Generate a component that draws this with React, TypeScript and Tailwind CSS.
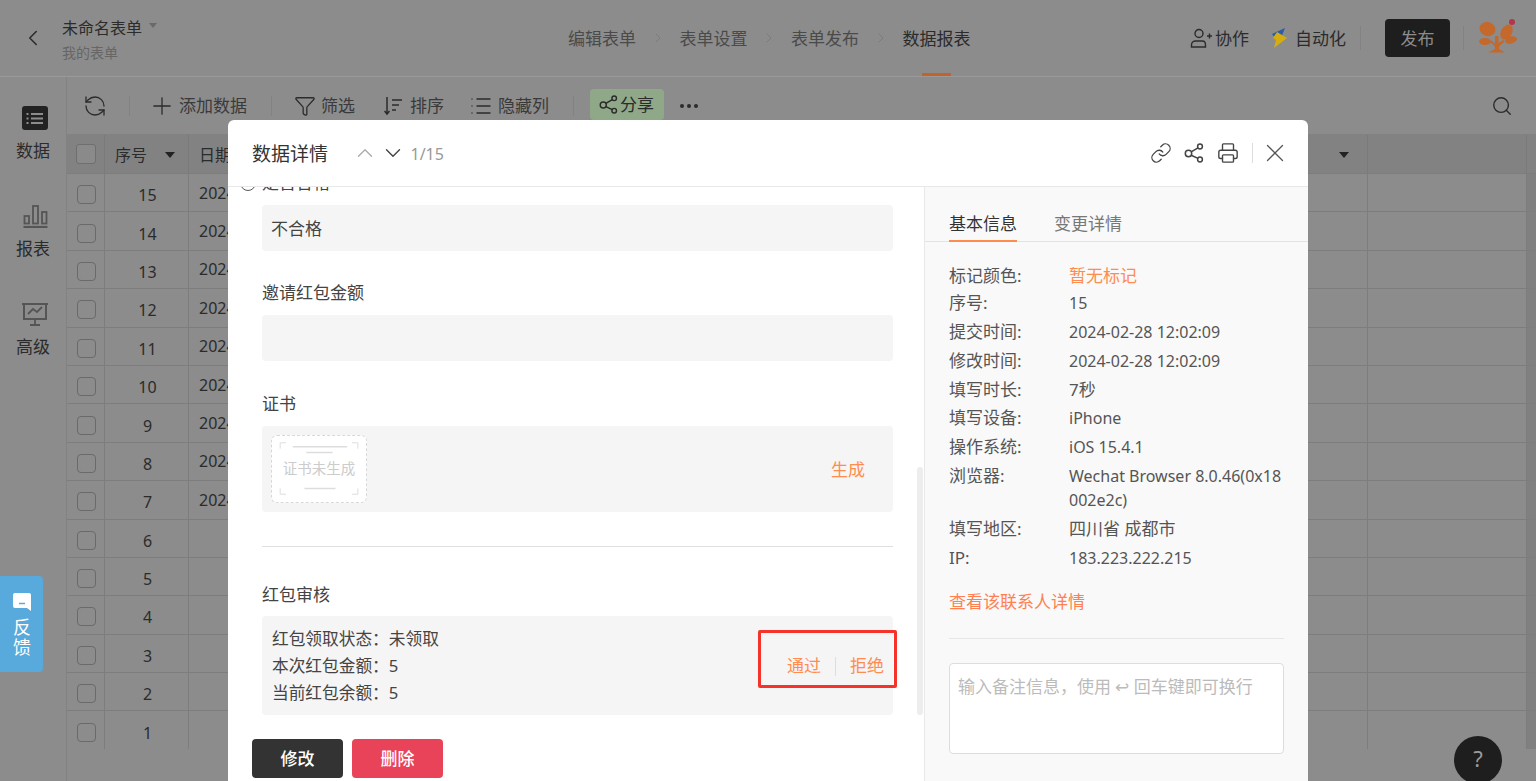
import {
  ChevronDown,
  ChevronLeft,
  ChevronRight,
  ChevronUp,
  Funnel,
  Link,
  List,
  Plus,
  Printer,
  RefreshCcw,
  Search,
  X,
} from 'lucide-react'

const rows = [15, 14, 13, 12, 11, 10, 9, 8, 7, 6, 5, 4, 3, 2, 1]

const info: [string, string, boolean][] = [
  ['序号:', '15', true],
  ['提交时间:', '2024-02-28 12:02:09', true],
  ['修改时间:', '2024-02-28 12:02:09', true],
  ['填写时长:', '7秒', false],
  ['填写设备:', 'iPhone', true],
  ['操作系统:', 'iOS 15.4.1', true],
  ['浏览器:', 'Wechat Browser 8.0.46(0x18002e2c)', true],
  ['填写地区:', '四川省 成都市', false],
  ['IP:', '183.223.222.215', true],
]

const ShareIcon = ({ className }: { className?: string }) => (
  <svg viewBox="0 0 20 20" fill="none" stroke="currentColor" strokeWidth="1.5" className={className}>
    <circle cx="4.5" cy="10.5" r="3.2" />
    <circle cx="16" cy="3.5" r="2.4" />
    <circle cx="16" cy="16.5" r="2.4" />
    <path d="M7.200 8.800 14 4.800M7.200 12.200l6.800 3.200" />
  </svg>
)

const Logo = () => (
  <svg viewBox="0 0 38 36" className="h-9 w-[38px]">
    <ellipse cx="8.500" cy="10" rx="8" ry="7" transform="rotate(20 8.500 10)" fill="#c4682c" />
    <ellipse cx="27.500" cy="13" rx="5.500" ry="8" transform="rotate(30 27.500 13)" fill="#c4682c" />
    <ellipse cx="6" cy="22.500" rx="6" ry="3.500" fill="#c4682c" />
    <ellipse cx="32" cy="21" rx="6" ry="3.500" transform="rotate(-15 32 21)" fill="#c4682c" />
    <path d="M16 17h3.500v7c2-1 3-2 5-3l1 1.500c-2 2-4.500 3.500-5.500 5.500v2l6 3.500H9l7-3.500v-2c-1-2-3-3.500-5-5l1-1.500c1.500 1 3 2 4 3Z" fill="#c4682c" />
    <circle cx="33" cy="3" r="3" fill="#b5344c" />
  </svg>
)

const Step = ({ label, active }: { label: string; active?: boolean }) => (
  <div className="relative flex h-[76px] items-center pt-[2px]">
    <span className={active ? 'text-[#2b2b2b]' : 'text-[#4a4a4a]'}>{label}</span>
    {active && <div className="absolute bottom-0 left-[19px] h-[3px] w-[29px] bg-[#c4622c]" />}
  </div>
)

const SideItem = ({ label, icon }: { label: string; icon: React.ReactNode }) => (
  <div className="flex h-[98px] flex-col items-center pt-[27px]">
    <div className="ml-[4px] flex h-[27px] items-center">{icon}</div>
    <span className="mt-[7px] text-[#2b2b2b]">{label}</span>
  </div>
)

export default function App() {
  return (
    <div className="relative h-[781px] w-[1536px] overflow-hidden bg-[#8c8c8c] font-['Noto_Sans','Noto_Sans_CJK_SC',sans-serif] text-[17px] text-[#2b2b2b]">
      {/* Top bar */}
      <header className="flex h-[77px] items-center border-b border-[#9a9a9a]">
        <div className="flex w-[568px] items-center pl-[20px]">
          <ChevronLeft className="size-[26px] text-[#2b2b2b]" strokeWidth={1.4} />
          <div className="mt-[3px] ml-[16px]">
            <div className="flex items-center text-[16px] leading-[22px]">
              未命名表单
              <span className="mb-1 ml-[7px] border-x-[4px] border-t-[5px] border-x-transparent border-t-[#6a6a6a]" />
            </div>
            <div className="mt-[4px] text-[14px] leading-[20px] text-[#666]">我的表单</div>
          </div>
        </div>
        <nav className="flex items-center">
          <Step label="编辑表单" />
          <ChevronRight className="mx-[13.750px] size-[16px] text-[#777]" strokeWidth={1.2} />
          <Step label="表单设置" />
          <ChevronRight className="mx-[13.750px] size-[16px] text-[#777]" strokeWidth={1.2} />
          <Step label="表单发布" />
          <ChevronRight className="mx-[13.750px] size-[16px] text-[#777]" strokeWidth={1.2} />
          <Step label="数据报表" active />
        </nav>
        <div className="ml-auto flex items-center pr-[19px]">
          <svg viewBox="0 0 22 20" fill="none" stroke="#2b2b2b" strokeWidth="1.4" className="h-[20px] w-[22px]">
            <circle cx="9" cy="5.500" r="4" />
            <path d="M1.500 19v-2c0-2.500 2-4 4-4h7c2 0 3 1.500 3 4v2Z" />
            <path d="M17 8h5M19.500 5.500v5" />
          </svg>
          <span className="mt-[2px] ml-[3px]">协作</span>
          <svg viewBox="0 0 16 20" className="ml-[23px] h-[20px] w-[16px]">
            <path d="M0 6 13 0 9 10H3Z" fill="#2b5ca8" />
            <path d="M5 4l10 6L2 20l2-8-3-2Z" fill="#d4ad10" />
          </svg>
          <span className="mt-[2px] ml-[7px]">自动化</span>
          <div className="ml-[14px] h-[24px] w-px bg-[#828282]" />
          <button type="button" className="ml-[24px] h-[38px] w-[65px] rounded-[4px] bg-[#1e1e1e] pt-[1px] text-[#8c8c8c]">
            发布
          </button>
          <div className="mx-[13px] h-[24px] w-px bg-[#828282]" />
          <div className="mt-[-2px] ml-[2px]">
            <Logo />
          </div>
        </div>
      </header>

      <div className="flex">
        {/* Side nav */}
        <aside className="h-[704px] w-[67px] shrink-0 border-r border-[#828282]">
          <SideItem
            label="数据"
            icon={
              <svg viewBox="0 0 26 24" className="h-[24px] w-[26px]">
                <rect width="26" height="24" rx="3" fill="#222" />
                <path d="M4.500 8h2M9 8h12M4.500 12.500h2M9 12.500h12M4.500 17h2M9 17h12" stroke="#8c8c8c" strokeWidth="1.800" />
              </svg>
            }
          />
          <SideItem
            label="报表"
            icon={
              <svg viewBox="0 0 24 24" fill="none" stroke="#555" strokeWidth="1.800" className="h-[24px] w-[25px]">
                <rect x="1" y="12" width="4.500" height="7.500" />
                <rect x="9.500" y="2" width="5" height="17.500" />
                <rect x="18.500" y="8" width="4.500" height="11.500" />
                <path d="M0 23h24" strokeWidth="2.200" />
              </svg>
            }
          />
          <SideItem
            label="高级"
            icon={
              <svg viewBox="0 0 26 26" fill="none" stroke="#555" strokeWidth="1.800" className="size-[26px]">
                <path d="M0 3h26M2 3v15h22V3" strokeWidth="2" />
                <path d="M6 13l5-5 4 3 5-5M13 18v6M8 24h10" />
              </svg>
            }
          />
        </aside>

        <main className="min-w-0 flex-1">
          {/* Toolbar */}
          <div className="flex h-[58px] items-center border-b border-[#828282] pl-[16px]">
            <RefreshCcw className="size-[24px]" strokeWidth={1.3} />
            <div className="mr-[18px] ml-[22px] h-[20px] w-px bg-[#828282]" />
            <Plus className="size-[28px]" strokeWidth={1.1} />
            <span className="ml-[3px] text-[#3a3a3a]">添加数据</span>
            <div className="mr-[22px] ml-[24px] h-[20px] w-px bg-[#828282]" />
            <Funnel className="size-[22px]" strokeWidth={1.4} />
            <span className="ml-[5px] text-[#3a3a3a]">筛选</span>
            <svg viewBox="0 0 18 20" fill="none" stroke="#2b2b2b" strokeWidth="1.500" className="ml-[29px] h-[20px] w-[18px]">
              <path d="M3 1v17M0.500 15 3 18l2.500-3" />
              <path d="M8 4h10M8 9h7M8 14h4" />
            </svg>
            <span className="ml-[8px] text-[#3a3a3a]">排序</span>
            <List className="ml-[25px] size-[24px]" strokeWidth={1.3} />
            <span className="ml-[5px] text-[#3a3a3a]">隐藏列</span>
            <div className="mr-[16px] ml-[24px] h-[20px] w-px bg-[#828282]" />
            <div className="mt-[12px] flex h-[31px] w-[74px] items-center gap-[2px] self-start rounded-[4px] bg-[#8fa888] pl-[9px]">
              <ShareIcon className="size-[19px]" />
              <span>分享</span>
            </div>
            <div className="ml-[16px] flex gap-[3px]">
              <span className="size-[4px] rounded-full bg-[#2b2b2b]" />
              <span className="size-[4px] rounded-full bg-[#2b2b2b]" />
              <span className="size-[4px] rounded-full bg-[#2b2b2b]" />
            </div>
            <Search className="mr-[23px] ml-auto size-[22px]" strokeWidth={1.5} />
          </div>

          {/* Table */}
          <div className="flex h-[38px] bg-[#828282]">
            <div className="flex w-[38px] items-center justify-center border-r border-[#7a7a7a]">
              <span className="size-[20px] rounded-[3px] border border-[#6f6f6f] bg-[#8a8a8a]" />
            </div>
            <div className="flex w-[84px] items-center border-r border-[#7a7a7a] pt-[2px] pl-[10px] text-[16px]">
              序号
              <span className="ml-[18px] border-x-[5px] border-t-[6px] border-x-transparent border-t-[#222]" />
            </div>
            <div className="flex flex-1 items-center justify-between border-r border-[#7a7a7a] pt-[2px] pr-[18px] pl-[10px] text-[16px]">
              日期
              <span className="border-x-[5px] border-t-[6px] border-x-transparent border-t-[#222]" />
            </div>
            <div className="w-[159px] border-r border-[#7a7a7a]" />
            <div className="w-[9px]" />
          </div>
          {rows.map((n) => (
            <div key={n} className="flex h-[38.400px] border-t border-[#7d7d7d]">
              <div className="flex w-[38px] items-center justify-center border-r border-[#7d7d7d] pt-[4px] pl-[2px]">
                <span className="size-[19px] rounded-[4px] border border-[#6a6a6a]" />
              </div>
              <div className="flex w-[84px] items-center justify-center border-r border-[#7d7d7d] pt-[5px] pl-[2px] text-[16px]">{n}</div>
              <div className="flex flex-1 items-center border-r border-[#7d7d7d] pl-[10px] text-[16px]">
                {n >= 7 ? '2024-02-28' : ''}
              </div>
              <div className="w-[159px] border-r border-[#7d7d7d]" />
              <div className="w-[9px] bg-[#808080]" />
            </div>
          ))}
        </main>
      </div>

      {/* Feedback tab */}
      <div className="absolute top-[576px] left-0 flex h-[96px] w-[43px] flex-col items-center rounded-r-[4px] bg-[#58a9dc] pt-[17px] pl-[1px] text-[#fff]">
        <svg viewBox="0 0 18 18" className="size-[18px]">
          <path d="M2 0h14a2 2 0 0 1 2 2v16l-4-3H2a2 2 0 0 1-2-2V2a2 2 0 0 1 2-2Z" fill="#fff" />
          <path d="M6 10.500h6" stroke="#58a9dc" strokeWidth="1.500" />
        </svg>
        <div className="mt-[6px] text-center text-[18px] leading-[20px]">反</div>
        <div className="text-center text-[18px] leading-[20px]">馈</div>
      </div>

      {/* Help */}
      <div className="absolute top-[736px] left-[1454px] flex size-[48px] items-center justify-center rounded-full bg-[#1e1e1e] pb-[3px] text-[22px] text-[#999]">
        ?
      </div>

      {/* Detail modal */}
      <div className="absolute top-[120px] left-[228px] flex h-[680px] w-[1080px] flex-col rounded-t-[6px] bg-white">
        <div className="flex h-[67px] shrink-0 items-center border-b border-[#e8e8e8] pr-[18.500px] pl-[24px]">
          <span className="pt-[3px] text-[19px] text-[#333]">数据详情</span>
          <ChevronUp className="ml-[24px] size-[26px] text-[#aaa]" strokeWidth={1.2} />
          <ChevronDown className="ml-[2px] size-[26px] text-[#444]" strokeWidth={1.3} />
          <span className="ml-[4.500px] pt-[2px] text-[16px] text-[#999]">1/15</span>
          <div className="ml-auto flex items-center text-[#444]">
            <Link className="size-[22px]" strokeWidth={1.4} />
            <ShareIcon className="ml-[12px] size-[20px]" />
            <Printer className="ml-[13px] size-[22px]" strokeWidth={1.5} />
            <div className="mr-[7px] ml-[13px] h-[20px] w-px bg-[#ddd]" />
            <X className="size-[30px] text-[#555]" strokeWidth={1} />
          </div>
        </div>

        <div className="flex min-h-0 flex-1">
          {/* Form column */}
          <div className="relative w-[697px] shrink-0 overflow-hidden border-r border-[#e8e8e8]">
            <div className="mt-[-16px] pr-[31px] pl-[34px]">
              <div className="flex h-[24px] items-center text-[#444]">
                <span className="absolute left-[12px] size-[16px] rounded-full border border-[#555]" />
                是否合格
              </div>
              <div className="mt-[10px] flex h-[46px] items-center rounded-[4px] bg-[#f5f5f5] pt-[1px] pl-[9px] text-[#444]">不合格</div>

              <div className="mt-[29px] h-[24px] pt-[1px] leading-[24px] text-[#444]">邀请红包金额</div>
              <div className="mt-[11px] h-[46px] rounded-[4px] bg-[#f5f5f5]" />

              <div className="mt-[31px] h-[24px] leading-[24px] text-[#444]">证书</div>
              <div className="mt-[10px] flex h-[86px] items-center justify-between rounded-[4px] bg-[#f5f5f5] pr-[28px] pl-[9px]">
                <div className="relative flex h-[68px] w-[96px] items-center justify-center rounded-[6px] border border-dashed border-[#d8d8d8] bg-white text-[14.500px] text-[#ccc]">
                  <svg viewBox="0 0 96 68" fill="none" stroke="#ddd" className="absolute inset-0 h-full w-full">
                    <path d="M8 13V7h6M88 13V7h-6M8 54v6h6M88 54v6h-6" />
                    <path d="M21 11h56M35 17h27M33 54h32" strokeWidth="1.500" />
                  </svg>
                  证书未生成
                </div>
                <span className="pt-[1px] text-[#ff8c4f]">生成</span>
              </div>

              <div className="mt-[34px] h-px bg-[#e0e0e0]" />

              <div className="mt-[35px] h-[24px] pt-[1px] leading-[24px] text-[#444]">红包审核</div>
              <div className="mt-[10px] flex h-[99px] items-center justify-between rounded-[4px] bg-[#f5f5f5] pr-[9px] pl-[10px]">
                <div className="mt-[2px] text-[16.700px] leading-[26.700px] text-[#444]">
                  <div>红包领取状态：未领取</div>
                  <div>本次红包金额：5</div>
                  <div>当前红包余额：5</div>
                </div>
                <div className="mt-[1px] flex items-center text-[#ff8c4f]">
                  通过
                  <span className="mx-[14px] h-[19px] w-px bg-[#ddd]" />
                  拒绝
                </div>
              </div>
            </div>

            {/* Review highlight */}
            <div className="absolute top-[443px] left-[530px] h-[58px] w-[139px] rounded-[2px] border-[3px] border-[#f5332a]" />
            {/* Scrollbar */}
            <div className="absolute top-[280px] left-[689px] h-[248px] w-[6px] rounded-full bg-[#ededed]" />

            <div className="absolute top-[552px] left-[24px] flex gap-[9px]">
              <button type="button" className="h-[39px] w-[91px] rounded-[4px] bg-[#333] font-medium text-white">
                修改
              </button>
              <button type="button" className="h-[39px] w-[91px] rounded-[4px] bg-[#e84358] font-medium text-white">
                删除
              </button>
            </div>
          </div>

          {/* Info column */}
          <div className="min-w-0 flex-1 bg-[#f9f9f9]">
            <div className="flex h-[55px] items-end gap-[37px] border-b border-[#e3e3e3] pl-[24px]">
              <span className="mb-[-1px] border-b-2 border-[#ff8c4f] pb-[4px] text-[#333]">基本信息</span>
              <span className="pb-[5px] text-[#777]">变更详情</span>
            </div>
            <div className="pt-[20.500px] pr-[24px] pl-[24px] text-[#555]">
              <div className="flex h-[24px] leading-[26px]">
                <span className="w-[120px] shrink-0">标记颜色:</span>
                <span className="text-[#ff8c4f]">暂无标记</span>
              </div>
              {info.map(([k, v, latin]) => (
                <div key={k} className="mt-[4.800px] flex leading-[24px]">
                  <span className="w-[120px] shrink-0">{k}</span>
                  <span className={latin ? 'text-[16px] break-all' : 'text-[17px]'}>{v}</span>
                </div>
              ))}
              <div className="mt-[20px] leading-[24px] text-[#ff7f50]">查看该联系人详情</div>
              <div className="mt-[24px] h-px bg-[#e6e6e6]" />
              <textarea
                placeholder="输入备注信息，使用 ↩ 回车键即可换行"
                className="mt-[24px] block h-[91px] w-full resize-none rounded-[4px] border border-[#ddd] bg-white px-[8px] pt-[10px] text-[17px] placeholder:text-[#bbb]"
              />
            </div>
          </div>
        </div>
      </div>
    </div>
  )
}
